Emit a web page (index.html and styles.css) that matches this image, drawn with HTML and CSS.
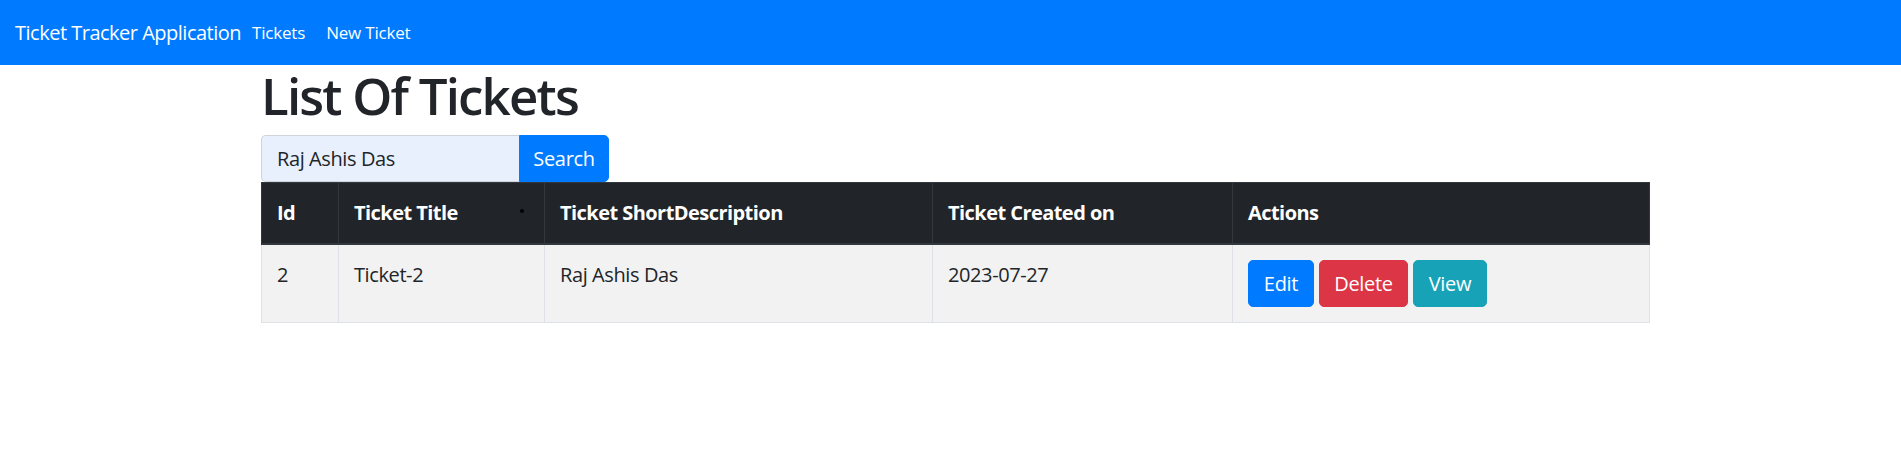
FILE: index.html
```html
<!DOCTYPE html>
<html lang="en">
<head>
<meta charset="utf-8">
<title>Ticket Tracker Application</title>
<link rel="stylesheet" href="styles.css">
</head>
<body>
<nav class="navbar">
  <a class="brand" href="#">Ticket Tracker Application</a>
  <a class="nav-link" href="#">Tickets</a>
  <a class="nav-link" href="#">New Ticket</a>
</nav>
<main class="container">
  <h1 class="title">List Of Tickets</h1>
  <form class="search-group">
    <input class="search-input" type="text" value="Raj Ashis Das">
    <button class="btn btn-primary btn-search" type="button">Search</button>
  </form>
  <table class="tickets">
    <colgroup>
      <col class="c-id"><col class="c-title"><col class="c-desc"><col class="c-date"><col class="c-actions">
    </colgroup>
    <thead>
      <tr>
        <th>Id</th>
        <th>Ticket Title<span class="dot"></span></th>
        <th>Ticket ShortDescription</th>
        <th>Ticket Created on</th>
        <th>Actions</th>
      </tr>
    </thead>
    <tbody>
      <tr>
        <td>2</td>
        <td>Ticket-2</td>
        <td>Raj Ashis Das</td>
        <td>2023-07-27</td>
        <td>
          <div class="actions">
            <button class="btn btn-primary btn-edit" type="button">Edit</button>
            <button class="btn btn-danger btn-delete" type="button">Delete</button>
            <button class="btn btn-info btn-view" type="button">View</button>
          </div>
        </td>
      </tr>
    </tbody>
  </table>
</main>
</body>
</html>
```
FILE: styles.css
```css
* { box-sizing: border-box; }
html, body { margin: 0; padding: 0; }
body {
  font-family: "Open Sans", "Noto Sans", sans-serif;
  color: #212529;
  background: #fff;
  font-size: 20px;
  line-height: 30px;
}
.navbar {
  display: flex;
  align-items: center;
  height: 65px;
  padding-left: 15px;
  background: #007bff;
}
.navbar a { color: #fff; text-decoration: none; }
.brand {
  font-size: 20px;
  letter-spacing: -0.5px;
  margin-right: 11px;
}
.nav-link {
  font-size: 17px;
  letter-spacing: -0.2px;
  margin-right: 21px;
}
.container {
  width: 1388px;
  margin-left: 261px;
}
.title {
  margin: 0 0 10px;
  font-size: 51px;
  line-height: 60px;
  font-weight: 600;
  letter-spacing: -1.8px;
}
.search-group {
  display: flex;
  height: 47px;
  margin: 0;
}
.search-input {
  width: 258px;
  height: 47px;
  padding: 0 15px;
  border: 1px solid #ced4da;
  border-right: 0;
  border-radius: 5px 0 0 5px;
  background: #e8f0fe;
  font: inherit;
  letter-spacing: -0.4px;
  color: #212529;
  outline: none;
}
.btn {
  display: inline-flex;
  align-items: center;
  justify-content: center;
  height: 47px;
  padding: 0;
  border: 1px solid transparent;
  border-radius: 5px;
  font: inherit;
  letter-spacing: -0.3px;
  color: #fff;
  cursor: pointer;
}
.btn-search {
  width: 90px;
  border-radius: 0 5px 5px 0;
}
.btn-edit { width: 66px; }
.btn-delete { width: 89px; }
.btn-view { width: 74px; }
.btn-primary { background: #007bff; border-color: #007bff; }
.btn-danger { background: #dc3545; border-color: #dc3545; }
.btn-info { background: #17a2b8; border-color: #17a2b8; }
.tickets {
  width: 1388px;
  table-layout: fixed;
  border-collapse: collapse;
  border: 1px solid #dee2e6;
}
.c-id { width: 77px; }
.c-title { width: 206px; }
.c-desc { width: 388px; }
.c-date { width: 300px; }
.c-actions { width: 417px; }
.tickets th {
  background: #212529;
  color: #fff;
  font-weight: 700;
  text-align: left;
  letter-spacing: -0.55px;
  padding: 15px;
  border: 1px solid #32383e;
  border-bottom-width: 2px;
  vertical-align: bottom;
}
.tickets td {
  background: #f2f2f2;
  padding: 15px;
  border: 1px solid #dee2e6;
  letter-spacing: -0.4px;
  vertical-align: top;
}
.actions {
  display: flex;
  gap: 5px;
}
.dot {
  float: right;
  width: 4px;
  height: 4px;
  margin: 11px 5px 0 0;
  border-radius: 50%;
  background: #000;
}
```
